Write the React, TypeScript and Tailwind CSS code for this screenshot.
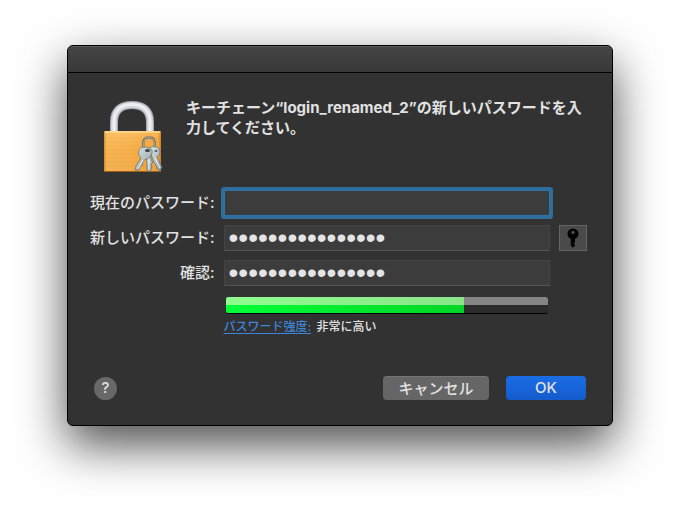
import { useState, type ReactNode } from 'react';

const PadlockIcon = () => (
  <svg viewBox="0 0 60 74" className="mt-[2px] h-[74px] w-[60px] shrink-0" aria-hidden="true">
    <defs>
      <linearGradient id="body" x1="0" y1="0" x2="0" y2="1">
        <stop offset="0" stopColor="#f9b95a" />
        <stop offset="0.5" stopColor="#f6a83c" />
        <stop offset="1" stopColor="#f0a640" />
      </linearGradient>
      <linearGradient id="side" x1="0" y1="0" x2="1" y2="0">
        <stop offset="0" stopColor="#b46a10" stopOpacity="0.6" />
        <stop offset="0.06" stopColor="#ffe0a0" stopOpacity="0.2" />
        <stop offset="0.4" stopColor="#ffe0a0" stopOpacity="0.15" />
        <stop offset="0.94" stopColor="#e08a20" stopOpacity="0.1" />
        <stop offset="1" stopColor="#b46a10" stopOpacity="0.7" />
      </linearGradient>
      <linearGradient id="key" x1="0" y1="0" x2="1" y2="1">
        <stop offset="0" stopColor="#dfe9ea" />
        <stop offset="1" stopColor="#8b989b" />
      </linearGradient>
    </defs>
    <g fill="none">
      <path d="M11 33V22C11 10 18 5 29 5S47 10 47 22V33" stroke="#a4a7ae" strokeWidth="8" />
      <path d="M11 33V22C11 10 18 5 29 5S47 10 47 22V33" stroke="#d0d3da" strokeWidth="6" />
      <path d="M11 33V22C11 10 18 4.500 29 4.500S47 10 47 22V33" stroke="#eceef4" strokeWidth="3" />
    </g>
    <rect x="1" y="31" width="57" height="41" rx="1" fill="url(#body)" />
    <path
      d="M2 38H57M2 42H57M2 46H57M2 50H57M2 54H57M2 58H57M2 62H57M2 66H57"
      stroke="#d98c20"
      strokeWidth="0.5"
      opacity="0.35"
    />
    <rect x="1" y="31" width="57" height="41" rx="1" fill="url(#side)" />
    <path d="M2 32H57" stroke="#ffdb93" strokeWidth="1.500" />
    <path d="M1 71.500H58" stroke="#9d6015" />
    <path d="M41 49C39 41 41 37.500 46 37.500S53 41 51 49" fill="none" stroke="#7c7364" strokeWidth="2.500" />
    <path d="M41 48C39.500 41 42 37.500 46 37.500S52 41 51 47" fill="none" stroke="#b5b3a8" strokeWidth="1" />
    <g stroke="#5d686b" strokeWidth="0.7" fill="url(#key)">
      <path d="M47 48C51 45 57 47 57 52C57 54 55.500 56 54 57L59 67L57 71L54 69L53 65L51 63L49 57Z" />
      <path d="M43 55L48 56L48 60L50 62L48 64L49 67L47 72L44 70V65Z" />
      <path d="M36 51C36 46 46 46 49 50C50 54 47 59 42 59.500L39 63L40 65L37 66L36 70L32 70L33 66L38 58C36 56 35 54 36 51Z" />
    </g>
    <ellipse cx="44.500" cy="50.500" rx="2.600" ry="1.500" fill="#394447" />
    <ellipse cx="53" cy="51" rx="1.500" ry="1" fill="#4d595c" />
    <path d="M40 60L35 69M46 59V70M52 58L57 68" stroke="#f2f6f6" strokeWidth="1" />
  </svg>
);

const KeyIcon = () => (
  <svg viewBox="0 0 12 20" className="h-5 w-3" aria-hidden="true">
    <path
      fillRule="evenodd"
      fill="#000"
      d="M6 .5A5.500 5.500 0 0 0 .5 6C.5 8 1.700 9.800 3.800 10.800V18L6 19.500L7.800 18V16.500L7 15.500L8 14.500V10.800C10.300 9.800 11.500 8 11.500 6A5.500 5.500 0 0 0 6 .5ZM6 2.700A1.800 1.800 0 1 1 6 6.300A1.800 1.800 0 0 1 6 2.700Z"
    />
  </svg>
);

type PasswordFieldProps = {
  id: string;
  label: string;
  value: string;
  onChange: (value: string) => void;
  focused?: boolean;
  children?: ReactNode;
};

const PasswordField = ({ id, label, value, onChange, focused, children }: PasswordFieldProps) => (
  <>
    <label htmlFor={id} className="mr-[9px] text-right text-[15px] leading-5 font-medium whitespace-nowrap">
      {label}
    </label>
    <input
      id={id}
      type="password"
      value={value}
      onChange={(e) => onChange(e.target.value)}
      className={`h-[26px] w-full min-w-0 border bg-[#3c3c3c] px-1 font-['Liberation_Sans',sans-serif] text-[28px] leading-6 text-[#e4e4e4] outline-none ${
        focused
          ? 'rounded-[1px] border-[#2f74a8] ring-3 ring-[#2e6d9c]'
          : 'border-[#444444] border-b-[#555555]'
      }`}
    />
    <div className="ml-[9px] w-7">{children}</div>
  </>
);

const App = () => {
  const [current, setCurrent] = useState('');
  const [next, setNext] = useState('abcdefgh12345678');
  const [confirm, setConfirm] = useState('abcdefgh12345678');
  const strength = 74;

  return (
    <main className="min-h-screen bg-white px-[67px] pt-[45px] pb-[89px] font-[Inter,'Noto_Sans_CJK_JP',sans-serif] text-[#e2e2e2]">
      <section
        role="dialog"
        aria-labelledby="dialog-title"
        className="overflow-hidden rounded-md border border-black bg-[#323232] shadow-[0_19px_48px_rgba(0,0,0,0.7)]"
      >
        <div className="h-[27px] border-t border-b border-t-[#5c5d5c] border-b-black bg-linear-to-b from-[#434443] to-[#383938]" />

        <form onSubmit={(e) => e.preventDefault()} className="pt-[25px] pr-[25px] pb-[25px] pl-[22px]">
          <div className="flex gap-[23px] pl-[13px]">
            <PadlockIcon />
            <h1 id="dialog-title" className="text-[15px] leading-5 font-bold">
              キーチェーン“login_renamed_2”の新しいパスワードを入力してください。
            </h1>
          </div>

          <div className="mt-4 grid grid-cols-[auto_1fr_auto] items-center gap-y-[9px]">
            <PasswordField id="current" label="現在のパスワード:" value={current} onChange={setCurrent} focused />
            <PasswordField id="next" label="新しいパスワード:" value={next} onChange={setNext}>
              <button
                type="button"
                aria-label="パスワードアシスタント"
                className="flex h-[26px] w-7 items-center justify-center border border-[#656565] bg-[#4a4a4a]"
              >
                <KeyIcon />
              </button>
            </PasswordField>
            <PasswordField id="confirm" label="確認:" value={confirm} onChange={setConfirm} />

            <div className="col-start-2 mt-[2px]">
              <div
                role="meter"
                aria-label="パスワード強度"
                aria-valuemin={0}
                aria-valuemax={100}
                aria-valuenow={strength}
                className="mx-[2px] h-[17px] overflow-hidden rounded-[3px] border-b border-black bg-linear-to-b from-[#858585] from-50% to-[#2c2c2c] to-50%"
              >
                <div
                  className="flex h-full flex-col bg-linear-to-r from-[#00ff36] to-[#00d626]"
                  style={{ width: `${strength}%` }}
                >
                  <div className="h-1/2 bg-linear-to-r from-[#90fd8f] to-[#8ae588]" />
                </div>
              </div>
              <p className="mt-[5px] text-xs leading-4 font-medium whitespace-nowrap">
                <a href="#strength" className="mr-[2px] text-[#3d86dc] underline underline-offset-2">
                  パスワード強度:
                </a>{' '}
                非常に高い
              </p>
            </div>
          </div>

          <div className="mt-[41px] flex items-center pl-1">
            <button
              type="button"
              aria-label="ヘルプ"
              className="flex size-[23px] items-center justify-center rounded-full bg-[#686868] text-[15px] leading-5 font-medium"
            >
              ?
            </button>
            <button
              type="button"
              className="ml-auto h-6 w-[106px] rounded-[4px] border-t border-[#757575] bg-[#666666] text-[15px] leading-5 font-medium"
            >
              キャンセル
            </button>
            <button
              type="submit"
              className="mr-px ml-[17px] h-6 w-20 rounded-[4px] bg-linear-to-b from-[#1b6de6] to-[#145bcb] text-[15px] leading-5 font-medium"
            >
              OK
            </button>
          </div>
        </form>
      </section>
    </main>
  );
};

export default App;
